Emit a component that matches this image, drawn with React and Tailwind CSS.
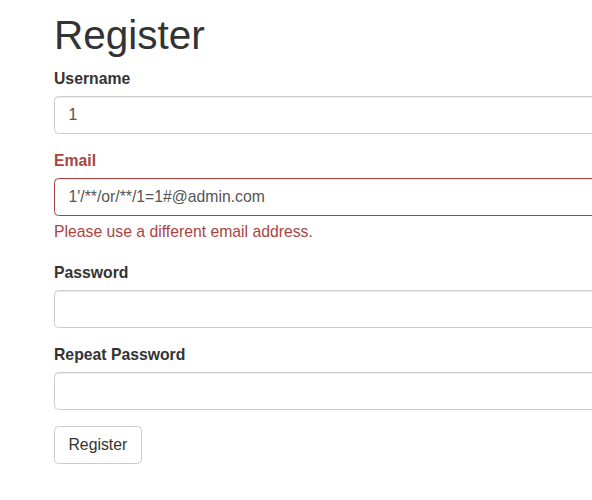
import React from "react";

function Label({ children, error }) {
  return (
    <label
      className={
        "block font-bold text-[15.75px] leading-[22px] mb-[5.5px] " +
        (error ? "text-[#a94442]" : "text-[#333]")
      }
    >
      {children}
    </label>
  );
}

function Input({ value, error, type = "text" }) {
  return (
    <input
      type={type}
      defaultValue={value}
      className={
        "block w-full h-[38px] px-[13.5px] py-[6.6px] text-[15.75px] leading-[22px] text-[#555] bg-white rounded-[4.5px] border outline-none shadow-[inset_0_1px_1px_rgba(0,0,0,0.075)] font-['Liberation_Sans',Arial,sans-serif] " +
        (error ? "border-[#a94442]" : "border-[#ccc]")
      }
    />
  );
}

export default function App() {
  return (
    <div className="w-full h-[500px] overflow-hidden bg-white font-['Liberation_Sans',Arial,sans-serif] text-[#333] pl-[54px] pt-[13px]">
      <div className="w-[800px]">
        <h1 className="text-[40.5px] leading-[44px] font-normal mb-[11px]">
          Register
        </h1>
        <form>
          <div className="mb-[16.5px]">
            <Label>Username</Label>
            <Input value="1" />
          </div>
          <div className="mb-[19px]">
            <Label error>Email</Label>
            <Input value="1'/**/or/**/1=1#@admin.com" error />
            <p className="mt-[5.5px] text-[15.75px] leading-[22px] text-[#a94442]">
              Please use a different email address.
            </p>
          </div>
          <div className="mb-[16.5px]">
            <Label>Password</Label>
            <Input type="password" />
          </div>
          <div className="mb-[16.5px]">
            <Label>Repeat Password</Label>
            <Input type="password" />
          </div>
          <button
            type="button"
            className="h-[37.5px] px-[13.5px] text-[15.75px] leading-[22px] text-[#333] bg-white border border-[#ccc] rounded-[4.5px]"
          >
            Register
          </button>
        </form>
      </div>
    </div>
  );
}
